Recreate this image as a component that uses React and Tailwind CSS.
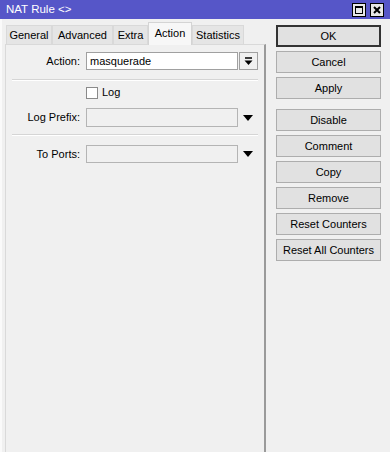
import React from "react";

const TABS = [
  { label: "General", w: "w-[46px]" },
  { label: "Advanced", w: "w-[61px]" },
  { label: "Extra", w: "w-[35px]" },
  { label: "Action", w: "w-[44px]", active: true },
  { label: "Statistics", w: "w-[52px]" },
];

const BUTTONS_TOP = ["Cancel", "Apply"];
const BUTTONS_BOTTOM = ["Comment", "Copy", "Remove", "Reset Counters", "Reset All Counters"];

function Btn({ children, primary }) {
  return (
    <button
      className={
        "w-[105px] h-[22px] flex items-center justify-center bg-[#e1e1e1] text-[11px] text-black " +
        (primary ? "border-2 border-[#333333]" : "border border-[#adadad]")
      }
    >
      {children}
    </button>
  );
}

function Separator() {
  return (
    <div className="ml-[6px] w-[246px]">
      <div className="h-px bg-[#d5d5d5]" />
      <div className="h-px bg-white" />
    </div>
  );
}

function Triangle() {
  return (
    <svg width="10" height="6" viewBox="0 0 10 6" className="ml-[5px]">
      <path d="M0 0 H10 L5 6 Z" fill="#000" />
    </svg>
  );
}

export default function App() {
  return (
    <div
      className="w-[390px] h-[452px] bg-[#f0f0f0] flex flex-col overflow-hidden text-black"
      style={{ fontFamily: '"Liberation Sans", Arial, sans-serif' }}
    >
      {/* title bar */}
      <div className="h-[19px] bg-[#5656c8] flex items-center justify-between pl-[6px] pr-[6px]">
        <span className="text-[11.5px] text-white">NAT Rule &lt;&gt;</span>
        <div className="flex gap-[4px]">
          <div className="w-[14px] h-[14px] bg-[#e8e8e8] border border-black flex items-center justify-center">
            <div className="w-[8px] h-[8px] border border-black border-t-2" />
          </div>
          <div className="w-[14px] h-[14px] bg-[#e8e8e8] border border-black flex items-center justify-center">
            <svg width="8" height="8" viewBox="0 0 8 8">
              <path d="M1 1 L7 7 M7 1 L1 7" stroke="#000" strokeWidth="2" />
            </svg>
          </div>
        </div>
      </div>

      <div className="flex flex-1 border-l-2 border-[#fafafa]">
        {/* left: tabs */}
        <div className="w-[264px] flex flex-col pl-[3px] pt-[3px]">
          <div className="h-[22px] flex items-end pl-px">
            {TABS.map((t) => (
              <div
                key={t.label}
                className={
                  t.w +
                  " flex items-center justify-center text-[11px] border border-b-0 " +
                  (t.active
                    ? "h-[23px] -mb-px bg-[#f7f7f7] border-[#d4d4d4] relative z-10 pb-[2px]"
                    : "h-[19px] bg-[#e5e5e5] border-[#d9d9d9]")
                }
              >
                {t.label}
              </div>
            ))}
          </div>
          <div className="flex-1 border-t border-l border-[#d9d9d9] border-r-2 border-r-[#9a9a9a] bg-[#f0f0f0] pt-[7px] flex flex-col">
            <div className="flex items-center h-[18px]">
              <span className="w-[74px] text-right text-[11px]">Action:</span>
              <div className="ml-[6px] w-[152px] h-[18px] bg-white border border-[#a0a0a0] flex items-center pl-[3px] text-[11px]">
                masquerade
              </div>
              <div className="ml-px w-[19px] h-[18px] border border-[#a0a0a0] bg-[#f0f0f0] flex items-center justify-center">
                <svg width="9" height="9" viewBox="0 0 9 9">
                  <path d="M1 1 H8" stroke="#000" strokeWidth="1.5" />
                  <path d="M0.5 3.5 H8.5 L4.5 8 Z" fill="#000" />
                </svg>
              </div>
            </div>
            <div className="mt-[9px]">
              <Separator />
            </div>
            <div className="mt-[5px] flex items-center h-[13px] ml-[80px]">
              <div className="w-[12px] h-[12px] bg-white border border-[#8a8a8a]" />
              <span className="ml-[4px] text-[11px]">Log</span>
            </div>
            <div className="mt-[9px] flex items-center h-[19px]">
              <span className="w-[74px] text-right text-[11px]">Log Prefix:</span>
              <div className="ml-[6px] w-[152px] h-[19px] bg-[#f0f0f0] border border-[#b4b4b4]" />
              <Triangle />
            </div>
            <div className="mt-[7px]">
              <Separator />
            </div>
            <div className="mt-[9px] flex items-center h-[18px]">
              <span className="w-[74px] text-right text-[11px]">To Ports:</span>
              <div className="ml-[6px] w-[152px] h-[18px] bg-[#f0f0f0] border border-[#b4b4b4]" />
              <Triangle />
            </div>
          </div>
        </div>

        {/* right: buttons */}
        <div className="flex-1 pl-[10px] pt-[6px] flex flex-col">
          <Btn primary>OK</Btn>
          <div className="mt-[4px] flex flex-col gap-[4px]">
            {BUTTONS_TOP.map((b) => (
              <Btn key={b}>{b}</Btn>
            ))}
          </div>
          <div className="mt-[10px] flex flex-col gap-[4px]">
            <Btn>Disable</Btn>
            {BUTTONS_BOTTOM.map((b) => (
              <Btn key={b}>{b}</Btn>
            ))}
          </div>
        </div>
      </div>
    </div>
  );
}
